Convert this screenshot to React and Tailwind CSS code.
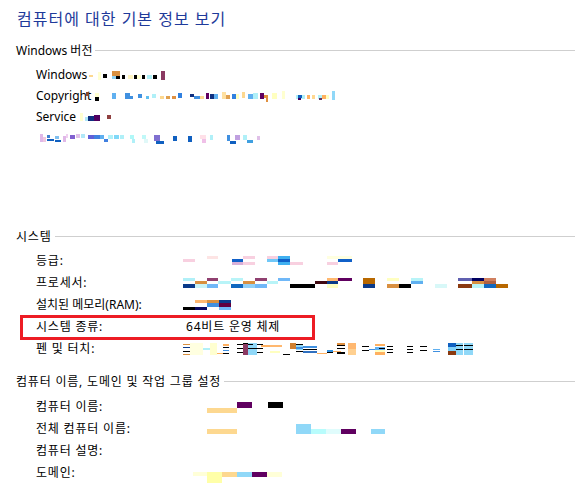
import React from "react";

// Mosaic blocks standing in for masked values. Cell = [x, y, w, h, colour], y relative to row centre.
function Mosaic({ cells, w }) {
  return (
    <svg
      width={w}
      height={24}
      viewBox={`0 -12 ${w} 24`}
      shapeRendering="crispEdges"
      className="shrink-0 block"
    >
      {cells.map(([x, y, cw, ch, c], i) => (
        <rect key={i} x={x} y={y} width={cw} height={ch} fill={c} />
      ))}
    </svg>
  );
}

const editionCells = [
  [1, 0, 4, 2, "#fdd890"], [10, -3, 3, 8, "#ffffd0"], [15, -1, 4, 4, "#000"],
  [24, -4, 8, 5, "#d99040"], [24, 1, 4, 3, "#90d0f0"], [28, 1, 4, 3, "#000"],
  [34, 0, 3, 4, "#000"], [40, 0, 5, 4, "#fff4c0"], [46, 0, 3, 4, "#000"],
  [49, 0, 4, 4, "#ffffd0"], [54, 0, 3, 4, "#000"], [59, 0, 5, 4, "#b0f0f8"],
  [65, 0, 4, 4, "#000"], [73, -4, 4, 9, "#8b3a62"],
];

const copyrightCells = [
  [0, -4, 3, 4, "#8a4a2a"], [9, -3, 4, 4, "#ffffd0"], [9, 1, 4, 4, "#000"],
  [26, -3, 4, 6, "#60b0f0"], [39, -3, 5, 6, "#4090e0"], [44, 0, 3, 3, "#4090e0"],
  [52, -2, 4, 4, "#4090e0"], [60, 0, 3, 3, "#60c0f0"], [66, -2, 4, 4, "#b0f0f8"],
  [74, 0, 4, 3, "#fdd890"], [80, 0, 4, 3, "#e0a050"], [86, 0, 4, 3, "#e09040"],
  [92, -3, 4, 5, "#3080e0"], [104, -2, 4, 3, "#103080"], [108, 0, 6, 3, "#4090e0"],
  [114, 0, 4, 3, "#fdd890"], [120, -3, 3, 6, "#600060"], [124, -2, 4, 5, "#103080"],
  [128, -2, 4, 5, "#60b0f0"], [136, -4, 4, 7, "#ffe0a0"], [140, -1, 4, 4, "#e0a050"],
  [146, -2, 4, 5, "#3080e0"], [150, -2, 3, 5, "#ffffc0"], [156, -4, 3, 6, "#fdd890"],
  [162, -2, 5, 5, "#60b0f0"], [167, -3, 5, 6, "#b0f0f8"], [174, -3, 4, 6, "#600060"],
  [178, -1, 4, 3, "#e09040"], [180, 2, 2, 4, "#e09040"], [186, -3, 5, 6, "#ffffc0"],
  [196, -5, 3, 8, "#ffffd0"], [210, -1, 9, 4, "#b0f0f8"], [212, -1, 4, 3, "#1060c0"],
  [212, 2, 3, 2, "#400060"], [221, -1, 3, 4, "#ffb060"], [226, -1, 3, 4, "#ffd890"],
  [232, -1, 4, 4, "#b0f0f8"], [233, 2, 3, 2, "#603060"], [236, -1, 4, 4, "#ffb060"],
  [240, -1, 3, 4, "#ffffc0"], [246, -5, 3, 9, "#90d8f8"],
];

const servicePackCells = [
  [0, -4, 3, 8, "#ffffd0"], [5, 0, 3, 4, "#b0e8f8"], [8, -1, 6, 5, "#103080"],
  [14, -2, 6, 6, "#500060"], [27, -2, 4, 4, "#904040"],
];

const upgradeLinkCells = [
  [4, -4, 3, 8, "#e0b8e8"], [7, -1, 3, 5, "#f0c8e0"], [11, -3, 3, 3, "#4080d0"],
  [11, 1, 7, 2, "#1060c0"], [19, -2, 4, 3, "#80c0f0"], [19, 2, 6, 2, "#1060c0"],
  [27, -2, 3, 6, "#e0b8e8"], [30, -4, 2, 4, "#f0d0f0"], [34, -3, 5, 4, "#8060d0"],
  [40, -4, 4, 4, "#e0c0e8"], [45, -4, 4, 4, "#b0e8f8"], [52, -3, 6, 4, "#6060d8"],
  [58, -3, 6, 4, "#4080e0"], [64, -3, 4, 4, "#60b0f0"], [68, 1, 4, 3, "#4080e0"],
  [72, -3, 5, 4, "#b0f0f8"], [78, -3, 5, 4, "#80d8f8"], [84, -3, 4, 4, "#b0f0f8"],
  [94, -3, 4, 4, "#b0f8f8"], [96, 1, 3, 4, "#b0f0f8"], [106, -3, 4, 4, "#c0f8f8"],
  [108, 1, 4, 4, "#e0f8f8"], [118, -3, 6, 6, "#8070d0"], [120, 3, 8, 3, "#1060c0"],
  [137, -2, 4, 5, "#1060c0"], [152, -2, 4, 6, "#1060c0"], [164, -3, 6, 4, "#ffe0e8"],
  [166, 1, 4, 4, "#f0c0e8"], [174, -3, 3, 5, "#b0f0f8"], [191, -3, 3, 6, "#4090e0"],
  [194, 3, 6, 3, "#1060c0"], [199, -3, 5, 5, "#c0a0e0"], [207, -3, 4, 5, "#b0f0f8"],
  [211, 2, 6, 3, "#40a0e0"], [221, -2, 3, 4, "#e0c0e8"],
];

const ratingCells = [
  [0, -2, 12, 3, "#f8d0e0"], [24, -5, 11, 3, "#fde4e4"], [49, -2, 11, 3, "#1060c8"],
  [49, 1, 11, 3, "#d8b0d8"], [60, -5, 12, 3, "#f8d0e0"], [60, 1, 12, 3, "#f8d0e0"],
  [84, -5, 11, 3, "#f8d0e0"], [84, -2, 11, 3, "#70c8f8"], [95, -5, 12, 3, "#40b0f0"],
  [95, -2, 12, 3, "#1060c8"], [95, 1, 12, 3, "#40b0f0"], [107, 1, 13, 3, "#f8d0e0"],
  [144, -5, 11, 3, "#ffffe0"], [144, 1, 11, 3, "#f8d0e0"], [155, -5, 14, 3, "#ffffe0"],
  [155, -2, 14, 3, "#1060c8"],
];

const cpuCells = [
  [0, -5, 12, 3, "#b0f0f8"], [0, 1, 12, 4, "#0a3a8a"], [12, -2, 12, 3, "#d99040"],
  [12, 1, 12, 4, "#c8f4f8"], [24, -5, 11, 3, "#904070"], [24, 1, 11, 4, "#70b8f8"],
  [35, -2, 13, 3, "#b8f4f8"], [48, -5, 12, 3, "#b8f4f8"], [48, 1, 12, 4, "#1068c0"],
  [60, -2, 12, 3, "#d99040"], [60, 1, 12, 4, "#90d0f8"], [72, -5, 12, 3, "#904070"],
  [72, 1, 12, 4, "#70b8f8"], [84, -2, 11, 3, "#b8f4f8"], [95, -5, 12, 3, "#70b8f8"],
  [107, 1, 25, 4, "#000"], [132, -2, 12, 3, "#400810"], [144, -5, 11, 3, "#ffb870"],
  [144, -2, 11, 3, "#0a3a8a"], [144, 1, 11, 4, "#ffffc0"], [155, -5, 14, 3, "#600060"],
  [180, -5, 12, 6, "#b86800"], [180, 1, 12, 4, "#0a3a8a"], [204, -5, 12, 3, "#ffffc0"],
  [204, 1, 12, 4, "#d99040"], [216, 1, 12, 4, "#000"], [228, -5, 12, 3, "#b8f4f8"],
  [228, -2, 12, 3, "#60b0f0"], [252, 1, 12, 4, "#d8f8f8"], [275, -5, 14, 3, "#6060b0"],
  [275, 1, 14, 4, "#8b3a10"], [289, -5, 12, 3, "#000060"], [289, -2, 12, 3, "#d99040"],
  [289, 1, 12, 4, "#b8f4f8"], [301, -5, 12, 3, "#d08060"], [301, -2, 12, 3, "#b06040"],
  [301, 1, 12, 4, "#1068c0"], [313, 1, 12, 4, "#b86800"],
];

const ramCells = [
  [0, 2, 12, 3, "#000"], [12, -5, 12, 3, "#ffb870"], [12, 2, 12, 3, "#0a0a60"],
  [24, -5, 12, 3, "#d99040"], [24, -2, 12, 4, "#4090e0"], [36, -5, 12, 3, "#0a3a8a"],
  [36, -2, 12, 4, "#600040"], [36, 2, 12, 3, "#70b8f8"],
];

const penCells = [
  [0, -5, 7, 1, "#d99040"], [0, -2, 7, 1, "#0a3a8a"], [0, 2, 7, 1, "#000"], [0, 5, 7, 1, "#d99040"],
  [7, -6, 13, 12, "#ffffe0"], [20, -1, 7, 2, "#b0f0f8"], [27, -6, 7, 12, "#ffffd0"],
  [34, 4, 6, 1, "#ffb060"],
  [40, -5, 6, 2, "#ffb060"], [40, -2, 6, 1, "#000"], [40, 1, 6, 1, "#4090e0"], [40, 4, 6, 1, "#000"],
  [54, -5, 6, 1, "#000"], [54, -1, 6, 1, "#000"], [54, 3, 6, 1, "#000"],
  [60, -6, 5, 12, "#8b3a62"], [60, -6, 5, 1, "#000"],
  [65, -6, 9, 12, "#90d8f8"], [65, -5, 5, 1, "#000"], [65, -1, 9, 1, "#000"],
  [74, -5, 6, 1, "#000"], [74, -1, 6, 1, "#000"], [74, 3, 6, 1, "#000"], [78, -4, 9, 2, "#ffb060"],
  [87, -4, 12, 2, "#ffb870"], [87, 2, 10, 2, "#ffffc0"],
  [100, 5, 7, 1, "#000"], [107, -6, 6, 6, "#d08030"],
  [113, -4, 7, 5, "#90d8f8"], [113, -5, 7, 1, "#000"], [113, -2, 7, 2, "#4090e0"], [113, 2, 7, 1, "#000"],
  [120, -3, 14, 2, "#4090e0"], [120, 0, 14, 1, "#000"], [120, 2, 14, 2, "#3070c0"],
  [134, 4, 10, 1, "#ffb060"], [144, 1, 6, 2, "#3090e0"], [144, 3, 6, 1, "#000"],
  [150, 2, 8, 1, "#ffb060"],
  [154, -6, 8, 2, "#e09040"], [154, -4, 8, 1, "#000"], [154, -1, 8, 1, "#000"], [154, 3, 8, 2, "#000"],
  [165, -6, 8, 6, "#ffb870"], [165, 0, 8, 6, "#ffd090"],
  [179, -3, 7, 1, "#000"], [179, 1, 7, 1, "#000"], [186, 0, 7, 1, "#4090e0"],
  [192, -5, 10, 2, "#ffb060"], [192, -2, 10, 3, "#60b0f0"], [192, 1, 10, 2, "#ffffc0"],
  [192, 3, 10, 3, "#ffb060"], [196, -1, 6, 1, "#000"],
  [204, -3, 6, 1, "#000"], [204, 0, 6, 1, "#000"], [204, 3, 6, 1, "#000"],
  [224, -3, 6, 1, "#000"], [224, 0, 6, 1, "#000"], [224, 3, 6, 1, "#000"],
  [237, -3, 7, 1, "#000"], [237, 1, 7, 1, "#000"],
  [250, 0, 7, 1, "#60b0f0"], [250, 2, 7, 1, "#4090e0"],
  [265, -6, 8, 4, "#1060c0"], [265, -2, 8, 4, "#80d0f8"], [265, 2, 8, 4, "#8b3a10"],
  [273, -6, 17, 12, "#90d8f8"], [273, -4, 17, 1, "#000"], [273, 0, 17, 1, "#000"], [280, -6, 1, 12, "#fff"],
];

const computerNameCells = [
  [14, 1, 30, 5, "#fdd890"], [44, -5, 15, 6, "#600060"], [75, -5, 15, 6, "#000"],
];

const fullNameCells = [
  [14, 0, 30, 5, "#fdd890"], [103, -5, 15, 10, "#90d8f8"], [118, 0, 15, 5, "#b8fcfc"],
  [133, 0, 15, 5, "#e0fcfc"], [148, 0, 15, 5, "#600060"], [178, 0, 14, 5, "#90d8f8"],
];

const domainCells = [
  [0, -1, 14, 4, "#ffffd8"], [14, -1, 15, 11, "#ffffa8"], [29, -1, 15, 5, "#fdd890"],
  [44, -1, 15, 5, "#90d8f8"], [59, -1, 15, 5, "#600060"], [74, -1, 15, 5, "#ffffd8"],
];

function SectionHeader({ children, className = "" }) {
  return (
    <div className={"flex items-center h-[16px] pl-[16px] " + className}>
      <span className="whitespace-nowrap">{children}</span>
      <div className="flex-1 h-px bg-[#cfcfcf] ml-[3px] mt-[-1px]" />
    </div>
  );
}

function Row({ label, labelWidth, children, height = "h-[22px]" }) {
  return (
    <div className={"relative flex items-center pl-[36px] " + height}>
      <span className={"shrink-0 whitespace-nowrap " + labelWidth}>{label}</span>
      {children}
    </div>
  );
}

// Hangul labels are set a little looser than the Latin ones
const K = ({ children }) => <span className="tracking-[0.8px]">{children}</span>;

export default function App() {
  return (
    <div className="w-[575px] h-[490px] bg-white overflow-hidden text-black text-[12px] leading-[16px] font-['Noto_Sans','Noto_Sans_CJK_KR',sans-serif]">
      <h1 className="pl-[17px] pt-[9px] text-[16px] leading-[20px] tracking-[1px] font-normal text-[#1e3a9a]">
        컴퓨터에 대한 기본 정보 보기
      </h1>

      <SectionHeader className="mt-[14px]">Windows 버전</SectionHeader>
      <div className="mt-[5px]">
        <Row label="Windows" labelWidth="w-[52px]" height="h-[21px]">
          <Mosaic cells={editionCells} w={80} />
        </Row>
        <Row label="Copyright" labelWidth="w-[50px]" height="h-[21px]">
          <Mosaic cells={copyrightCells} w={252} />
        </Row>
        <Row label="Service" labelWidth="w-[44px]" height="h-[21px]">
          <Mosaic cells={servicePackCells} w={34} />
        </Row>
        <div className="flex items-center h-[21px] pl-[36px]">
          <Mosaic cells={upgradeLinkCells} w={230} />
        </div>
      </div>

      <SectionHeader className="mt-[81px]"><K>시스템</K></SectionHeader>
      <div className="mt-[5px]">
        <Row label={<K>등급:</K>} labelWidth="w-[147px]">
          <Mosaic cells={ratingCells} w={172} />
        </Row>
        <Row label={<K>프로세서:</K>} labelWidth="w-[147px]">
          <Mosaic cells={cpuCells} w={326} />
        </Row>
        <Row label="설치된 메모리(RAM):" labelWidth="w-[147px]">
          <Mosaic cells={ramCells} w={50} />
        </Row>
        <Row label={<K>시스템 종류:</K>} labelWidth="w-[150px]">
          <span className="whitespace-nowrap tracking-[0.8px]">64비트 운영 체제</span>
          <div className="absolute left-[20px] top-[-1px] w-[295px] h-[25px] border-[3px] border-[#ed1c24]" />
        </Row>
        <Row label={<K>펜 및 터치:</K>} labelWidth="w-[147px]">
          <Mosaic cells={penCells} w={292} />
        </Row>
      </div>

      <SectionHeader className="mt-[14px]"><K>컴퓨터 이름, 도메인 및 작업 그룹 설정</K></SectionHeader>
      <div className="mt-[6px]">
        <Row label={<K>컴퓨터 이름:</K>} labelWidth="w-[157px]">
          <Mosaic cells={computerNameCells} w={92} />
        </Row>
        <Row label={<K>전체 컴퓨터 이름:</K>} labelWidth="w-[157px]">
          <Mosaic cells={fullNameCells} w={194} />
        </Row>
        <Row label={<K>컴퓨터 설명:</K>} labelWidth="w-[157px]" />
        <Row label={<K>도메인:</K>} labelWidth="w-[157px]">
          <Mosaic cells={domainCells} w={90} />
        </Row>
      </div>
    </div>
  );
}
